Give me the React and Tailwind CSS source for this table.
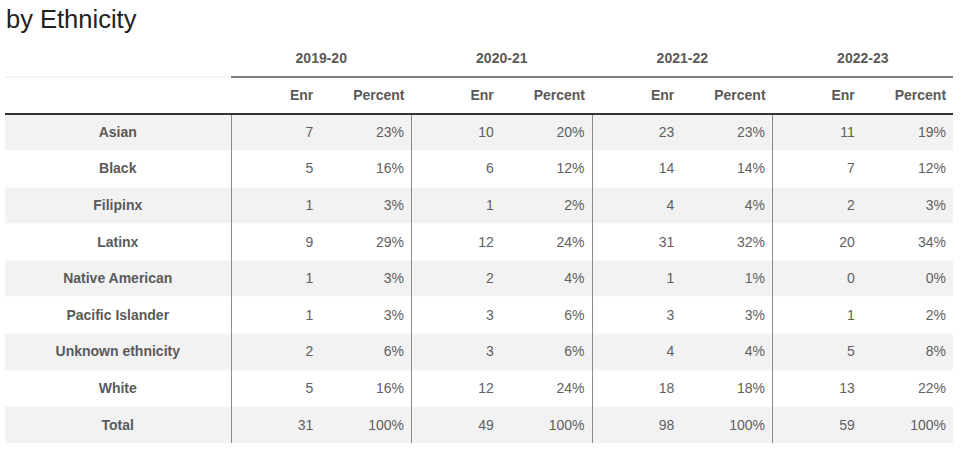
import React from "react";

const rows = [
  ["Asian", 7, "23%", 10, "20%", 23, "23%", 11, "19%"],
  ["Black", 5, "16%", 6, "12%", 14, "14%", 7, "12%"],
  ["Filipinx", 1, "3%", 1, "2%", 4, "4%", 2, "3%"],
  ["Latinx", 9, "29%", 12, "24%", 31, "32%", 20, "34%"],
  ["Native American", 1, "3%", 2, "4%", 1, "1%", 0, "0%"],
  ["Pacific Islander", 1, "3%", 3, "6%", 3, "3%", 1, "2%"],
  ["Unknown ethnicity", 2, "6%", 3, "6%", 4, "4%", 5, "8%"],
  ["White", 5, "16%", 12, "24%", 18, "18%", 13, "22%"],
  ["Total", 31, "100%", 49, "100%", 98, "100%", 59, "100%"],
];

const years = ["2019-20", "2020-21", "2021-22", "2022-23"];

export default function App() {
  return (
    <div
      className="bg-white w-[974px] h-[456px] px-[5px] text-[#5f5f5f]"
      style={{ fontFamily: '"Liberation Sans", Arial, sans-serif' }}
    >
      <h1 className="pt-[4px] text-[25.5px] leading-[30px] text-[#222] pl-[1px]">by Ethnicity</h1>
      <table className="mt-[6px] w-[948px] table-fixed border-collapse text-[14px]">
        <colgroup>
          <col className="w-[226px]" />
          {Array.from({ length: 8 }).map((_, i) => (
            <col key={i} className="w-[90.25px]" />
          ))}
        </colgroup>
        <thead>
          <tr className="h-[37px]">
            <th className="border-b-2 border-[#f4f4f4]"></th>
            {years.map((y) => (
              <th key={y} colSpan={2} className="border-b-2 border-[#808080] font-bold text-center text-[#5a5a5a] align-middle">
                {y}
              </th>
            ))}
          </tr>
          <tr className="h-[37px]">
            <th className="border-b-2 border-[#333]"></th>
            {years.map((y) => (
              <React.Fragment key={y}>
                <th className="border-b-2 border-[#333] text-right pr-[8px] font-bold text-[#5a5a5a]">Enr</th>
                <th className="border-b-2 border-[#333] text-right pr-[7px] font-bold text-[#5a5a5a]">Percent</th>
              </React.Fragment>
            ))}
          </tr>
        </thead>
        <tbody>
          {rows.map((r, i) => (
            <tr
              key={r[0]}
              className={
                "h-[36.6px] border-t border-[#fafafa] " + (i % 2 === 0 ? "bg-[#f2f2f2]" : "bg-white")
              }
            >
              <td className="text-center font-bold text-[#5a5a5a]">{r[0]}</td>
              {[0, 1, 2, 3].map((g) => (
                <React.Fragment key={g}>
                  <td className="text-right pr-[8px] border-l border-l-[#8a8a8a]">{r[1 + g * 2]}</td>
                  <td className="text-right pr-[7px]">{r[2 + g * 2]}</td>
                </React.Fragment>
              ))}
            </tr>
          ))}
        </tbody>
      </table>
    </div>
  );
}
